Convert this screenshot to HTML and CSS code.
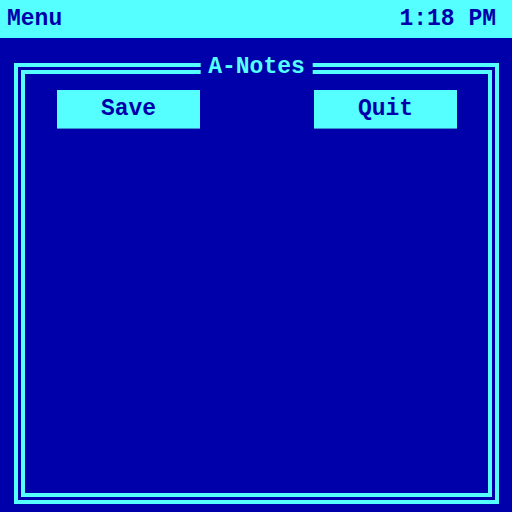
FILE: index.html
```html
<!DOCTYPE html>
<html>
<head>
<meta charset="utf-8">
<link rel="stylesheet" href="styles.css">
</head>
<body>
<header class="topbar">
  <span class="menu">Menu</span>
  <span class="clock">1:18 PM</span>
</header>
<main class="desk">
  <section class="frame">
    <div class="title">A-Notes</div>
    <div class="inner">
      <div class="buttons">
        <button class="btn">Save</button>
        <button class="btn">Quit</button>
      </div>
    </div>
  </section>
</main>
</body>
</html>
```
FILE: styles.css
```css
html, body {
  margin: 0;
  padding: 0;
  width: 512px;
  height: 512px;
  overflow: hidden;
  background: #0000aa;
  font-family: "Liberation Mono", "DejaVu Sans Mono", monospace;
  font-weight: bold;
  font-size: 23px;
  color: #0000aa;
}
.topbar {
  height: 38px;
  background: #55ffff;
  display: flex;
  justify-content: space-between;
  align-items: center;
  padding: 0 16px 0 7px;
  box-sizing: border-box;
  line-height: 1;
}
.desk {
  padding: 25px 13px 8px 14px;
}
.frame {
  position: relative;
  height: 441px;
  box-sizing: border-box;
  border: 4px solid #55ffff;
  padding: 3px;
}
.title {
  position: absolute;
  left: 50%;
  top: 0;
  transform: translate(-50%, -50%);
  background: #0000aa;
  color: #55ffff;
  padding: 0 8px;
  line-height: 24px;
}
.inner {
  height: 100%;
  box-sizing: border-box;
  border: 4px solid #55ffff;
  padding: 16px 31px 0 32px;
}
.buttons {
  display: flex;
  justify-content: space-between;
}
.btn {
  width: 143px;
  height: 39px;
  border: 0;
  border-bottom: 1px solid #3a8fd0;
  background: #55ffff;
  color: #0000aa;
  font: inherit;
  padding: 0;
  line-height: 1;
}
```
